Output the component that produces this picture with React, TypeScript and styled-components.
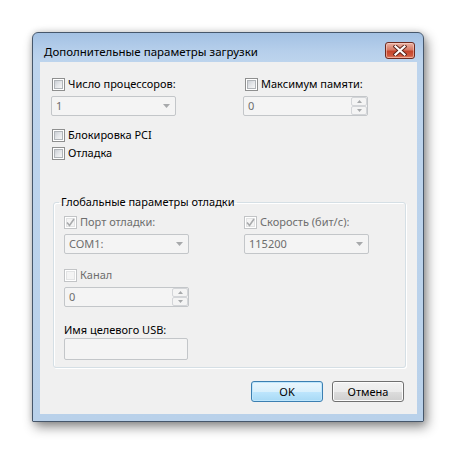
import React from 'react';
import styled, { createGlobalStyle, css } from 'styled-components';

const Global = createGlobalStyle`
  html, body { margin: 0; padding: 0; background: #ffffff; }
  body { font-family: "Noto Sans", "Open Sans", sans-serif; font-size: 11px; line-height: 16px; color: #000; }
  * { box-sizing: border-box; }
`;

const Page = styled.div`
  width: 457px;
  height: 455px;
  padding: 32px 0 0 32px;
`;

const Window = styled.div`
  width: 392px;
  height: 390px;
  border: 1px solid #46576b;
  border-radius: 6px 6px 1px 1px;
  background: linear-gradient(180deg, #a3c1e3 0px, #b6cfeb 18px, #bdd4ed 29px, #b9d1ea 100%);
  box-shadow: 3px 5px 12px rgba(0, 0, 0, 0.45), 0 0 6px rgba(0, 0, 0, 0.15);
  display: flex;
  flex-direction: column;
`;

const TitleBar = styled.div`
  height: 29px;
  display: flex;
  align-items: flex-start;
  justify-content: space-between;
  padding: 0 8px 0 11px;
`;

const Title = styled.div`
  margin-top: 11px;
  font-size: 11.5px;
  line-height: 16px;
  color: #000;
`;

const CloseButton = styled.div`
  margin-top: 9px;
  width: 30px;
  height: 17px;
  border: 1px solid #6e2a1f;
  border-radius: 3px;
  background: linear-gradient(180deg, #eab3a5 0%, #d77a65 45%, #c4442b 55%, #d0593f 85%, #e48a6d 100%);
  display: flex;
  align-items: center;
  justify-content: center;
  box-shadow: inset 0 0 0 1px rgba(255, 220, 210, 0.5);
`;

const Client = styled.div`
  flex: 1;
  margin: 0 6px 7px 7px;
  background: #f0f0f0;
  display: flex;
  flex-direction: column;
  padding: 14px 0 0 11px;
`;

const TopGrid = styled.div`
  display: grid;
  grid-template-columns: 192px 1fr;
`;

const Column = styled.div`
  display: flex;
  flex-direction: column;
`;

const CheckRow = styled.div<{ $mt?: number; $indent?: number }>`
  height: 16px;
  display: flex;
  align-items: center;
  margin-top: ${(p) => p.$mt ?? 0}px;
  padding-left: ${(p) => p.$indent ?? 1}px;
`;

const Box = styled.span<{ $disabled?: boolean }>`
  width: 13px;
  height: 13px;
  flex: none;
  border: 1px solid ${(p) => (p.$disabled ? '#c2c4c6' : '#8e8f8f')};
  background: #fff;
  padding: 1px;
  display: flex;
  align-items: center;
  justify-content: center;
  position: relative;
  &::before {
    content: '';
    position: absolute;
    inset: 1px;
    ${(p) =>
      p.$disabled
        ? css`background: #f4f4f4; border: 1px solid #e2e3e4;`
        : css`background: linear-gradient(135deg, #cbcfd5 0%, #e4e6e9 50%, #f6f6f6 100%); border: 1px solid #b0b4b8;`}
  }
  svg { position: relative; }
`;

const Label = styled.span<{ $disabled?: boolean }>`
  margin-left: 3px;
  color: ${(p) => (p.$disabled ? '#6d6d6d' : '#000')};
  white-space: nowrap;
`;

const Field = styled.div<{ $mt?: number; $w?: number; $h?: number }>`
  width: ${(p) => p.$w ?? 125}px;
  height: ${(p) => p.$h ?? 20}px;
  margin-top: ${(p) => p.$mt ?? 0}px;
  border: 1px solid #c3c6c9;
  border-radius: 2px;
  background: #f4f4f4;
  display: flex;
  align-items: center;
  padding-left: 4px;
  color: #6d6d6d;
`;

const FieldText = styled.span`
  flex: 1;
`;

const ArrowWrap = styled.span`
  width: 17px;
  height: 100%;
  display: flex;
  align-items: center;
  justify-content: center;
`;

const SpinCol = styled.div`
  width: 16px;
  height: 100%;
  display: flex;
  flex-direction: column;
`;

const SpinBtn = styled.div`
  flex: 1;
  border: 1px solid #d3d5d8;
  border-radius: 2px;
  background: #f4f4f4;
  display: flex;
  align-items: center;
  justify-content: center;
`;

const Group = styled.fieldset`
  margin: 33px 0 0 2px;
  width: 353px;
  height: 174px;
  border: 1px solid #d5dfe5;
  border-radius: 3px;
  box-shadow: inset 1px 1px 0 #fff, 1px 1px 0 #fff;
  padding: 4px 10px 0 10px;
  min-width: 0;
`;

const Legend = styled.legend`
  padding: 0 2px;
  margin-left: -5px;
  line-height: 16px;
  color: #000;
`;

const GroupGrid = styled.div`
  display: grid;
  grid-template-columns: 180px 1fr;
`;

const PlainLabel = styled.div<{ $mt?: number }>`
  margin-top: ${(p) => p.$mt ?? 0}px;
  height: 16px;
  line-height: 16px;
`;

const ButtonRow = styled.div`
  margin-top: 13px;
  padding-right: 13px;
  display: flex;
  justify-content: flex-end;
  gap: 9px;
`;

const Button = styled.div<{ $default?: boolean }>`
  width: 72px;
  height: 21px;
  border-radius: 3px;
  display: flex;
  align-items: center;
  justify-content: center;
  color: #000;
  ${(p) =>
    p.$default
      ? css`
          border: 1px solid #3c7fb1;
          background: linear-gradient(180deg, #eaf6fd 0%, #d9f0fc 50%, #bee6fd 51%, #a7d9f5 100%);
          box-shadow: inset 0 0 0 1px #bfe7fd;
        `
      : css`
          border: 1px solid #707070;
          background: linear-gradient(180deg, #f2f2f2 0%, #ebebeb 50%, #dddddd 51%, #cfcfcf 100%);
          box-shadow: inset 0 0 0 1px #fcfcfc;
        `}
`;

const Check = ({ disabled, checked }: { disabled?: boolean; checked?: boolean }) => (
  <Box $disabled={disabled}>
    {checked && (
      <svg width="9" height="9" viewBox="0 0 9 9">
        <path d="M1 4.5 L3.5 7.5 L8 1" fill="none" stroke="#a8aaac" strokeWidth="1.6" />
      </svg>
    )}
  </Box>
);

const DownArrow = () => (
  <svg width="7" height="4" viewBox="0 0 7 4">
    <path d="M0 0 H7 L3.5 4 Z" fill="#a7a9ab" />
  </svg>
);

const SmallArrow = ({ up }: { up?: boolean }) => (
  <svg width="5" height="3" viewBox="0 0 5 3">
    <path d={up ? 'M0 3 H5 L2.5 0 Z' : 'M0 0 H5 L2.5 3 Z'} fill="#a7a9ab" />
  </svg>
);

const Combo = ({ value, mt }: { value: string; mt?: number }) => (
  <Field $mt={mt}>
    <FieldText>{value}</FieldText>
    <ArrowWrap>
      <DownArrow />
    </ArrowWrap>
  </Field>
);

const Spin = ({ value, mt }: { value: string; mt?: number }) => (
  <Field $mt={mt}>
    <FieldText>{value}</FieldText>
    <SpinCol>
      <SpinBtn>
        <SmallArrow up />
      </SpinBtn>
      <SpinBtn>
        <SmallArrow />
      </SpinBtn>
    </SpinCol>
  </Field>
);

export default function App() {
  return (
    <>
      <Global />
      <Page>
        <Window>
          <TitleBar>
            <Title>Дополнительные параметры загрузки</Title>
            <CloseButton>
              <svg width="14" height="11" viewBox="0 0 14 11">
                <path d="M2.5 1.5 L11.5 9.5 M11.5 1.5 L2.5 9.5" stroke="#5a2219" strokeWidth="4" strokeLinecap="square" />
                <path d="M2.5 1.5 L11.5 9.5 M11.5 1.5 L2.5 9.5" stroke="#ffffff" strokeWidth="2.2" strokeLinecap="square" />
              </svg>
            </CloseButton>
          </TitleBar>
          <Client>
            <TopGrid>
              <Column>
                <CheckRow>
                  <Check />
                  <Label>Число процессоров:</Label>
                </CheckRow>
                <Combo value="1" mt={4} />
                <CheckRow $mt={11}>
                  <Check />
                  <Label>Блокировка PCI</Label>
                </CheckRow>
                <CheckRow $mt={2}>
                  <Check />
                  <Label>Отладка</Label>
                </CheckRow>
              </Column>
              <Column>
                <CheckRow $indent={2}>
                  <Check />
                  <Label>Максимум памяти:</Label>
                </CheckRow>
                <Spin value="0" mt={4} />
              </Column>
            </TopGrid>
            <Group>
              <Legend>Глобальные параметры отладки</Legend>
              <GroupGrid>
                <Column>
                  <CheckRow $indent={0}>
                    <Check disabled checked />
                    <Label $disabled>Порт отладки:</Label>
                  </CheckRow>
                  <Combo value="COM1:" mt={4} />
                  <CheckRow $mt={13} $indent={0}>
                    <Check disabled />
                    <Label $disabled>Канал</Label>
                  </CheckRow>
                  <Spin value="0" mt={4} />
                  <PlainLabel $mt={15}>Имя целевого USB:</PlainLabel>
                  <Field $w={124} $h={22} />
                </Column>
                <Column>
                  <CheckRow $indent={0}>
                    <Check disabled checked />
                    <Label $disabled>Скорость (бит/с):</Label>
                  </CheckRow>
                  <Combo value="115200" mt={4} />
                </Column>
              </GroupGrid>
            </Group>
            <ButtonRow>
              <Button $default>OK</Button>
              <Button>Отмена</Button>
            </ButtonRow>
          </Client>
        </Window>
      </Page>
    </>
  );
}
